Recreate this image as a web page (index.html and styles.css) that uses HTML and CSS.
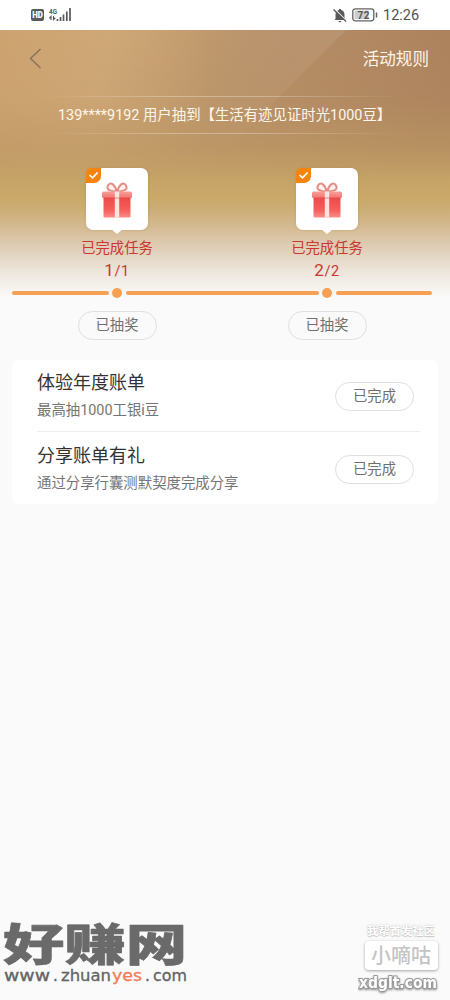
FILE: index.html
```html
<!DOCTYPE html>
<html lang="zh-CN">
<head>
<meta charset="utf-8">
<title>活动任务</title>
<link rel="stylesheet" href="styles.css">
</head>
<body>
<svg class="defs" aria-hidden="true">
  <defs>
    <linearGradient id="box" x1="0" y1="0" x2="0" y2="1"><stop offset="0" stop-color="#ec4a49"/><stop offset=".65" stop-color="#f65f5c"/><stop offset="1" stop-color="#fa8d88"/></linearGradient>
    <linearGradient id="lid" x1="0" y1="0" x2="0" y2="1"><stop offset="0" stop-color="#f9a09a"/><stop offset="1" stop-color="#f27470"/></linearGradient>
    <symbol id="gift" viewBox="0 0 32 38">
      <path d="M15.500 9.500C10 9.500 4.500 8 7 3.500S14.500 3 15.500 9.500Z" fill="#fff1ee" stroke="#e58c85" stroke-width="2"/>
      <path d="M16.500 9.500C22 9.500 27.500 8 25 3.500S17.500 3 16.500 9.500Z" fill="#fff1ee" stroke="#e58c85" stroke-width="2"/>
      <rect x="2.500" y="15" width="27" height="20.500" rx="1" fill="url(#box)"/>
      <rect x="1" y="9.500" width="30" height="6.500" rx="1.500" fill="url(#lid)"/>
      <rect x="13.800" y="9.500" width="4.400" height="26" fill="#fde3df"/>
      <path d="M2.500 16h27" stroke="#df4545" stroke-width="1" opacity=".6"/>
    </symbol>
    <symbol id="check" viewBox="0 0 15 15">
      <path d="M5 0h10v8a7 7 0 0 1-7 7H0V5a5 5 0 0 1 5-5Z" fill="#f5840f"/>
      <path d="M3.500 7 6.500 9.800 11.600 4.500" fill="none" stroke="#fff" stroke-width="1.700"/>
    </symbol>
  </defs>
</svg>

<header class="status">
  <svg class="status-left" width="42" height="16" viewBox="0 0 42 16">
    <rect x="0" y="2" width="13" height="12" rx="2" fill="#59595b"/>
    <text x="1.200" y="11.200" class="hd" textLength="10.600" lengthAdjust="spacingAndGlyphs">HD</text>
    <text x="18" y="7" class="net" textLength="8" lengthAdjust="spacingAndGlyphs">4G</text>
    <path d="M20 13V9.500L18.200 11.300M22.500 9V12.500L24.300 10.800" stroke="#59595b" stroke-width="1.200" fill="none"/>
    <path d="M26.500 14v-2M29.500 14v-4M32.500 14V7.500M35.800 14V4.500M39 14V1" stroke="#59595b" stroke-width="1.700"/>
  </svg>
  <div class="status-right">
    <svg width="14" height="15" viewBox="0 0 14 15">
      <path d="M2.500 11V6.500C2.500 4 4 2.500 6 2V1h2v1c2.200.5 3.500 2.200 3.500 4.500V10l1.500 2H1.300ZM5.300 13h3.400L7 14.500Z" fill="#59595b"/>
      <path d="m1.500.8 12 12" stroke="#fff" stroke-width="1.200"/><path d="m.5 1.500 12.500 12" stroke="#59595b" stroke-width="1.400"/>
    </svg>
    <svg width="26" height="14" viewBox="0 0 26 14">
      <rect x=".8" y=".8" width="21" height="12" rx="2.500" fill="#fff" stroke="#626264" stroke-width="1.300"/>
      <rect x="2.500" y="2.500" width="14" height="8.600" fill="#ccc"/>
      <path d="M24.500 4.500v5" stroke="#626264" stroke-width="1.500"/>
      <text x="5.500" y="10.500" class="charge" textLength="12">72</text>
    </svg>
    <span class="clock">12:26</span>
  </div>
</header>

<main>
  <section class="hero">
    <svg class="hero-shade" width="450" height="270" viewBox="0 0 450 270" preserveAspectRatio="none">
      <defs>
        <linearGradient id="top" x1="0" y1="0" x2="1" y2=".15"><stop offset="0" stop-color="#cca370"/><stop offset=".25" stop-color="#cfa878"/><stop offset=".38" stop-color="#c69f71"/><stop offset=".52" stop-color="#b9936a"/><stop offset=".65" stop-color="#b48c65"/><stop offset="1" stop-color="#ab825d"/></linearGradient>
        <linearGradient id="fade" x1="0" y1="0" x2="0" y2="1"><stop offset="0" stop-color="#fff"/><stop offset=".25" stop-color="#ddd"/><stop offset=".55" stop-color="#000"/></linearGradient>
        <linearGradient id="beam" x1="0" y1="0" x2="1" y2="0"><stop offset="0" stop-color="#fff" stop-opacity="0"/><stop offset="1" stop-color="#fff" stop-opacity=".09"/></linearGradient>
        <mask id="topmask"><rect width="450" height="270" fill="url(#fade)"/></mask>
      </defs>
      <g mask="url(#topmask)">
        <rect width="450" height="270" fill="url(#top)"/>
        <path d="M205 0H346L226 120H205Z" fill="url(#beam)"/>
      </g>
    </svg>
    <nav class="nav">
      <svg width="13" height="21" viewBox="0 0 13 21"><path d="M11.500 1 1.500 10.500 11.500 20" fill="none" stroke="#857461" stroke-width="1.500"/></svg>
      <a class="rules">活动规则</a>
    </nav>
    <div class="ticker"><span>139****9192 用户抽到【生活有迹见证时光1000豆】</span></div>
    <div class="stages">
      <div class="stage">
        <div class="bubble"><svg class="badge"><use href="#check"/></svg><svg class="gift"><use href="#gift"/></svg></div>
        <div class="label">已完成任务</div>
        <div class="count"><b>1</b>/1</div>
        <div class="track"><i class="bar"></i><i class="dot"></i><i class="bar joined-right"></i></div>
        <button class="pill">已抽奖</button>
      </div>
      <div class="stage">
        <div class="bubble"><svg class="badge"><use href="#check"/></svg><svg class="gift"><use href="#gift"/></svg></div>
        <div class="label">已完成任务</div>
        <div class="count"><b>2</b>/2</div>
        <div class="track"><i class="bar joined-left"></i><i class="dot"></i><i class="bar"></i></div>
        <button class="pill">已抽奖</button>
      </div>
    </div>
  </section>

  <section class="card">
    <div class="task">
      <div class="info"><h2>体验年度账单</h2><p>最高抽1000工银i豆</p></div>
      <button class="pill">已完成</button>
    </div>
    <div class="task">
      <div class="info"><h2>分享账单有礼</h2><p>通过分享行囊测默契度完成分享</p></div>
      <button class="pill">已完成</button>
    </div>
  </section>
</main>

<footer class="marks">
  <svg class="brand-mark" width="192" height="80" viewBox="0 0 192 80">
    <g transform="translate(3 41) scale(1.380 1)"><text class="brand">好赚网</text></g>
    <g class="site">
      <text x="4" y="61" textLength="46" lengthAdjust="spacingAndGlyphs">www</text>
      <text x="53" y="61">.</text>
      <text x="61" y="61" textLength="50" lengthAdjust="spacingAndGlyphs">zhuan</text>
      <text x="112" y="61" class="yes" textLength="30" lengthAdjust="spacingAndGlyphs">yes</text>
      <text x="145" y="61">.</text>
      <text x="153" y="61" textLength="34" lengthAdjust="spacingAndGlyphs">com</text>
    </g>
  </svg>
  <div class="forum">
    <div class="forum-top">我帮首发社区</div>
    <div class="forum-name">小嘀咕</div>
    <svg width="86" height="30" viewBox="0 0 86 30"><text x="1" y="18" class="forum-url" textLength="78" lengthAdjust="spacingAndGlyphs">xdglt.com</text></svg>
  </div>
</footer>
</body>
</html>
```
FILE: styles.css
```css
* { box-sizing: border-box; }
body {
  margin: 0;
  width: 450px;
  height: 1000px;
  overflow: hidden;
  display: flex;
  flex-direction: column;
  background: #fafafa;
  font-family: Roboto, "Noto Sans CJK SC", sans-serif;
  color: #333;
}
svg { display: block; }
.defs { position: absolute; width: 0; height: 0; }

.status {
  height: 30px;
  flex: none;
  padding: 0 31px;
  display: flex;
  justify-content: space-between;
  align-items: center;
  background: #fff;
}
.status-right { display: flex; align-items: center; gap: 5px; }
.hd { font: 900 8.5px Roboto, sans-serif; fill: #fff; }
.net { font: bold 8px Roboto, sans-serif; fill: #59595b; }
.charge { font: bold 10px Roboto, sans-serif; fill: #555; }
.clock { font-size: 14.5px; line-height: 16px; color: #505052; margin-top: 1px; }
.status-right .clock { width: 36px; white-space: nowrap; }

.hero {
  position: relative;
  height: 330px;
  background: linear-gradient(#bd9566 0, #be9864 115px, #c9a869 165px, #cbab70 176px, #d3b98e 195px, #dfceb8 218px, #ede6dc 242px, #fafafa 268px);
}
.hero-shade { position: absolute; left: 0; top: 0; }
.nav, .ticker, .stages { position: relative; }
.nav {
  height: 57px;
  padding: 0 21px 0 29px;
  display: flex;
  justify-content: space-between;
  align-items: center;
}
.rules { font-size: 16.6px; line-height: 24px; color: #fff5e6; margin-top: 2px; }
.ticker {
  height: 38px;
  margin: 9px 45px 0;
  border-style: solid;
  border-width: 1px 0;
  border-image: linear-gradient(90deg, transparent, rgba(255,255,255,.3) 35%, rgba(255,255,255,.3) 60%, transparent) 1;
  padding: 0 0 4px 13px;
  display: flex;
  align-items: center;
  font-size: 14.4px;
  white-space: nowrap;
  color: #fff6e8;
}
.stages {
  margin: 34px 18px 0 12px;
  display: grid;
  grid-template-columns: 1fr 1fr;
}
.stage { display: flex; flex-direction: column; align-items: center; }
.bubble {
  position: relative;
  width: 62px;
  height: 62px;
  border-radius: 7px;
  background: #fff;
  box-shadow: 0 0 3px rgba(150,110,60,.25);
  display: flex;
  justify-content: center;
}
.bubble::after {
  content: "";
  position: absolute;
  left: 25px;
  top: 61px;
  border: 6px solid transparent;
  border-top: 5px solid #fff;
  border-bottom: 0;
}
.badge { position: absolute; left: 0; top: 0; width: 15px; height: 15px; }
.gift { width: 32px; height: 38px; margin-top: 14px; }
.label { margin-top: 7px; font-size: 14.3px; line-height: 22px; color: #c9372e; }
.count { font-size: 14.5px; line-height: 23px; letter-spacing: .6px; color: #c9372e; }
.count b { font-size: 17px; font-weight: 400; }
.track { width: 100%; height: 10px; margin-top: 5px; display: flex; align-items: center; gap: 3.500px; }
.bar { flex: 1; height: 4px; border-radius: 2px; background: #f6a053; }
.bar.joined-right { border-radius: 2px 0 0 2px; }
.bar.joined-left { border-radius: 0 2px 2px 0; }
.dot { width: 10px; height: 10px; border-radius: 50%; background: #f6a053; }
.pill {
  width: 79px;
  height: 29px;
  padding: 0 0 1px;
  border: 1px solid #dfdfdf;
  border-radius: 15px;
  background: transparent;
  font: 14.3px/20px Roboto, "Noto Sans CJK SC", sans-serif;
  color: #707070;
}
.stage .pill { margin-top: 13px; }

.card {
  margin: 0 12px;
  height: 144px;
  border-radius: 8px;
  background: #fff;
  padding: 0 18px 0 25px;
}
.task {
  height: 71px;
  padding-right: 6px;
  display: flex;
  justify-content: space-between;
  align-items: center;
}
.task .pill { margin-top: 1px; }
.task + .task { border-top: 1px solid #eee; height: 74px; }
.info h2 { margin: 0; font-size: 18px; line-height: 26px; font-weight: 400; color: #333; }
.info p { margin: 4px 0 0; font-size: 14.4px; line-height: 22px; color: #757575; }

.marks {
  margin-top: auto;
  height: 80px;
  padding-right: 6px;
  display: flex;
  justify-content: space-between;
}
.brand-mark { overflow: visible; }
.brand { font: 900 44.5px "Noto Sans CJK SC", sans-serif; fill: #6a6a6a; stroke: #6a6a6a; stroke-width: .6px; stroke-linejoin: round; }
.site { font: 15px "DejaVu Sans", sans-serif; fill: #646464; stroke: #646464; stroke-width: .3px; }
.site .yes { fill: #f47b58; stroke: #f47b58; }
.forum { width: 86px; display: flex; flex-direction: column; align-items: center; }
.forum-top {
  margin-top: 2px;
  font: bold 11.3px/16px "Noto Sans CJK SC", sans-serif;
  color: #fff;
  text-shadow: 0 0 2px #bbb, 0 1px 1px #ccc;
}
.forum-name {
  width: 73px;
  height: 29px;
  margin-top: 3px;
  border-radius: 4px;
  background: #fff;
  box-shadow: 0 1px 3px rgba(0,0,0,.35);
  text-align: center;
  font: 500 20px/28px "Noto Sans CJK SC", sans-serif;
  color: #c4c4c4;
}
.forum-url {
  font: bold 15px "DejaVu Sans", sans-serif;
  fill: #fff;
  stroke: #999;
  stroke-width: 1.8px;
  paint-order: stroke;
  filter: drop-shadow(0 1px 1px #888);
}
```
